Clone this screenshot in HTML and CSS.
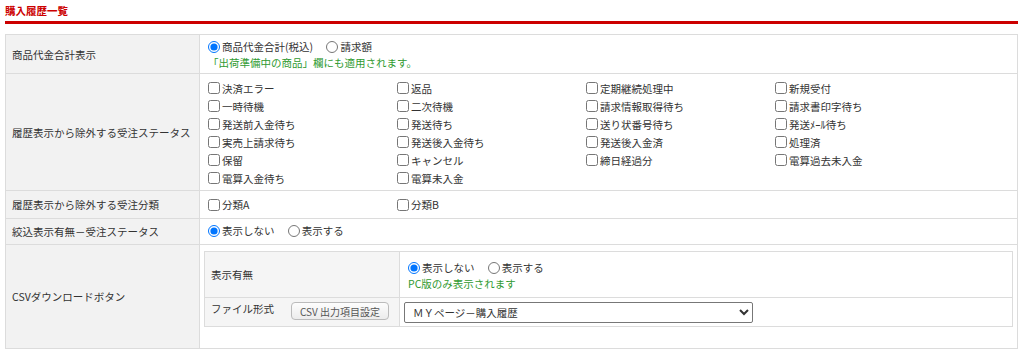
FILE: index.html
```html
<!DOCTYPE html>
<html>
    <head>
        <meta charset="utf-8">
        <link rel="stylesheet" href="styles.css">
    </head>
    <body>
        <div id="page">
            <h1 class="title">購入履歴一覧</h1>
            <table class="settings">
                <tr class="r-total">
                    <th>商品代金合計表示</th>
                    <td class="pad">
                        <label class="opt"><input type="radio" name="total" checked>商品代金合計(税込)</label>
                        <label class="opt"><input type="radio" name="total">請求額</label>
                        <div class="note">「出荷準備中の商品」欄にも適用されます。</div>
                    </td>
                </tr>
                <tr class="r-status">
                    <th>履歴表示から除外する受注ステータス</th>
                    <td class="checks">
                        <div class="grid">
                            <label><input type="checkbox">決済エラー</label>
                            <label><input type="checkbox">返品</label>
                            <label><input type="checkbox">定期継続処理中</label>
                            <label><input type="checkbox">新規受付</label>
                            <label><input type="checkbox">一時待機</label>
                            <label><input type="checkbox">二次待機</label>
                            <label><input type="checkbox">請求情報取得待ち</label>
                            <label><input type="checkbox">請求書印字待ち</label>
                            <label><input type="checkbox">発送前入金待ち</label>
                            <label><input type="checkbox">発送待ち</label>
                            <label><input type="checkbox">送り状番号待ち</label>
                            <label><input type="checkbox">発送ﾒｰﾙ待ち</label>
                            <label><input type="checkbox">実売上請求待ち</label>
                            <label><input type="checkbox">発送後入金待ち</label>
                            <label><input type="checkbox">発送後入金済</label>
                            <label><input type="checkbox">処理済</label>
                            <label><input type="checkbox">保留</label>
                            <label><input type="checkbox">キャンセル</label>
                            <label><input type="checkbox">締日経過分</label>
                            <label><input type="checkbox">電算過去未入金</label>
                            <label><input type="checkbox">電算入金待ち</label>
                            <label><input type="checkbox">電算未入金</label>
                        </div>
                    </td>
                </tr>
                <tr class="r-class">
                    <th>履歴表示から除外する受注分類</th>
                    <td class="checks mid">
                        <div class="grid">
                            <label><input type="checkbox">分類A</label>
                            <label><input type="checkbox">分類B</label>
                        </div>
                    </td>
                </tr>
                <tr class="r-filter">
                    <th>絞込表示有無－受注ステータス</th>
                    <td class="pad mid">
                        <label class="opt"><input type="radio" name="filter" checked>表示しない</label>
                        <label class="opt"><input type="radio" name="filter">表示する</label>
                    </td>
                </tr>
                <tr class="r-csv">
                    <th>CSVダウンロードボタン</th>
                    <td class="nest">
                        <table class="inner">
                            <tr class="tall">
                                <th>表示有無</th>
                                <td>
                                    <label class="opt"><input type="radio" name="csv" checked>表示しない</label>
                                    <label class="opt"><input type="radio" name="csv">表示する</label>
                                    <div class="note">PC版のみ表示されます</div>
                                </td>
                            </tr>
                            <tr class="short">
                                <th>
                                    <div class="split">
                                        <span>ファイル形式</span>
                                        <button class="btn">CSV 出力項目設定</button>
                                    </div>
                                </th>
                                <td>
                                    <select class="pick">
                                        <option>ＭＹページ－購入履歴</option>
                                    </select>
                                </td>
                            </tr>
                        </table>
                    </td>
                </tr>
            </table>
        </div>
    </body>
</html>
```

FILE: styles.css
```css
body {
    margin: 0;
    font-family: "Noto Sans CJK JP", "Noto Sans", sans-serif;
    font-size: 10.5px;
    color: #333;
    background: #fff;
}

#page {
    width: 1013px;
    margin-left: 5px;
}

.title {
    margin: 0;
    padding-top: 4px;
    height: 17px;
    box-sizing: content-box;
    font-size: 10.5px;
    line-height: 13px;
    font-weight: bold;
    color: #cc0000;
    border-bottom: 3px solid #cc0000;
}

.settings {
    width: 100%;
    margin-top: 10px;
    border-collapse: collapse;
}

.settings th,
.settings td {
    border: 1px solid #dcdcdc;
    padding: 0;
}

.settings th {
    width: 187px;
    padding-left: 6px;
    background: #f2f2f2;
    font-weight: normal;
    text-align: left;
    vertical-align: middle;
    white-space: nowrap;
}

.settings td {
    background: #fff;
    vertical-align: top;
}

.r-total { height: 39px; }
.r-status { height: 117px; }
.r-class { height: 28px; }
.r-filter { height: 26px; }
.r-csv { height: 104px; }

.pad {
    padding: 5px 0 0 8px !important;
    line-height: 14px;
}

.settings td.mid {
    vertical-align: middle;
    padding-top: 0 !important;
    padding-bottom: 0 !important;
}

.opt {
    display: inline-flex;
    align-items: center;
    margin-right: 11px;
}

input[type=radio] {
    width: 12px;
    height: 12px;
    margin: 0 2px 0 0;
}

input[type=checkbox] {
    width: 12px;
    height: 12px;
    margin: 0 2px 0 0;
}

.note {
    color: #2f9a2f;
}

.checks {
    padding: 5px 0 0 8px !important;
}

.grid {
    display: grid;
    grid-template-columns: repeat(4, 189px);
}

.grid label {
    display: flex;
    align-items: center;
    height: 18px;
}

.nest {
    padding: 6px 4px 0 4px !important;
}

.inner {
    width: 100%;
    border-collapse: collapse;
}

.inner th {
    width: 188px;
    padding-left: 6px;
    background: #f5f5f5;
    vertical-align: top;
}

.inner .tall th {
    vertical-align: middle;
}

.inner td {
    padding: 0 0 0 8px !important;
    vertical-align: middle;
    line-height: 14px;
}

.inner .tall {
    height: 46px;
}

.inner .tall td {
    padding-top: 2px !important;
}

.inner .short {
    height: 29px;
}

.inner .short td {
    padding: 0 0 0 4px !important;
}

.split {
    display: flex;
    align-items: flex-start;
    height: 28px;
    padding-top: 4px;
    box-sizing: border-box;
}

.split span {
    width: 80px;
    line-height: 13px;
}

.btn {
    width: 98px;
    height: 18px;
    padding: 0;
    font-family: inherit;
    font-size: 10px;
    color: #555;
    border: 1px solid #bbb;
    border-radius: 4px;
    background: linear-gradient(#fdfdfd, #ececec);
}

.pick {
    width: 349px;
    height: 21px;
    font-family: inherit;
    font-size: 10.5px;
    color: #333;
    border: 1px solid #777;
    border-radius: 2px;
    background: #fff;
    padding-left: 4px;
}
```
